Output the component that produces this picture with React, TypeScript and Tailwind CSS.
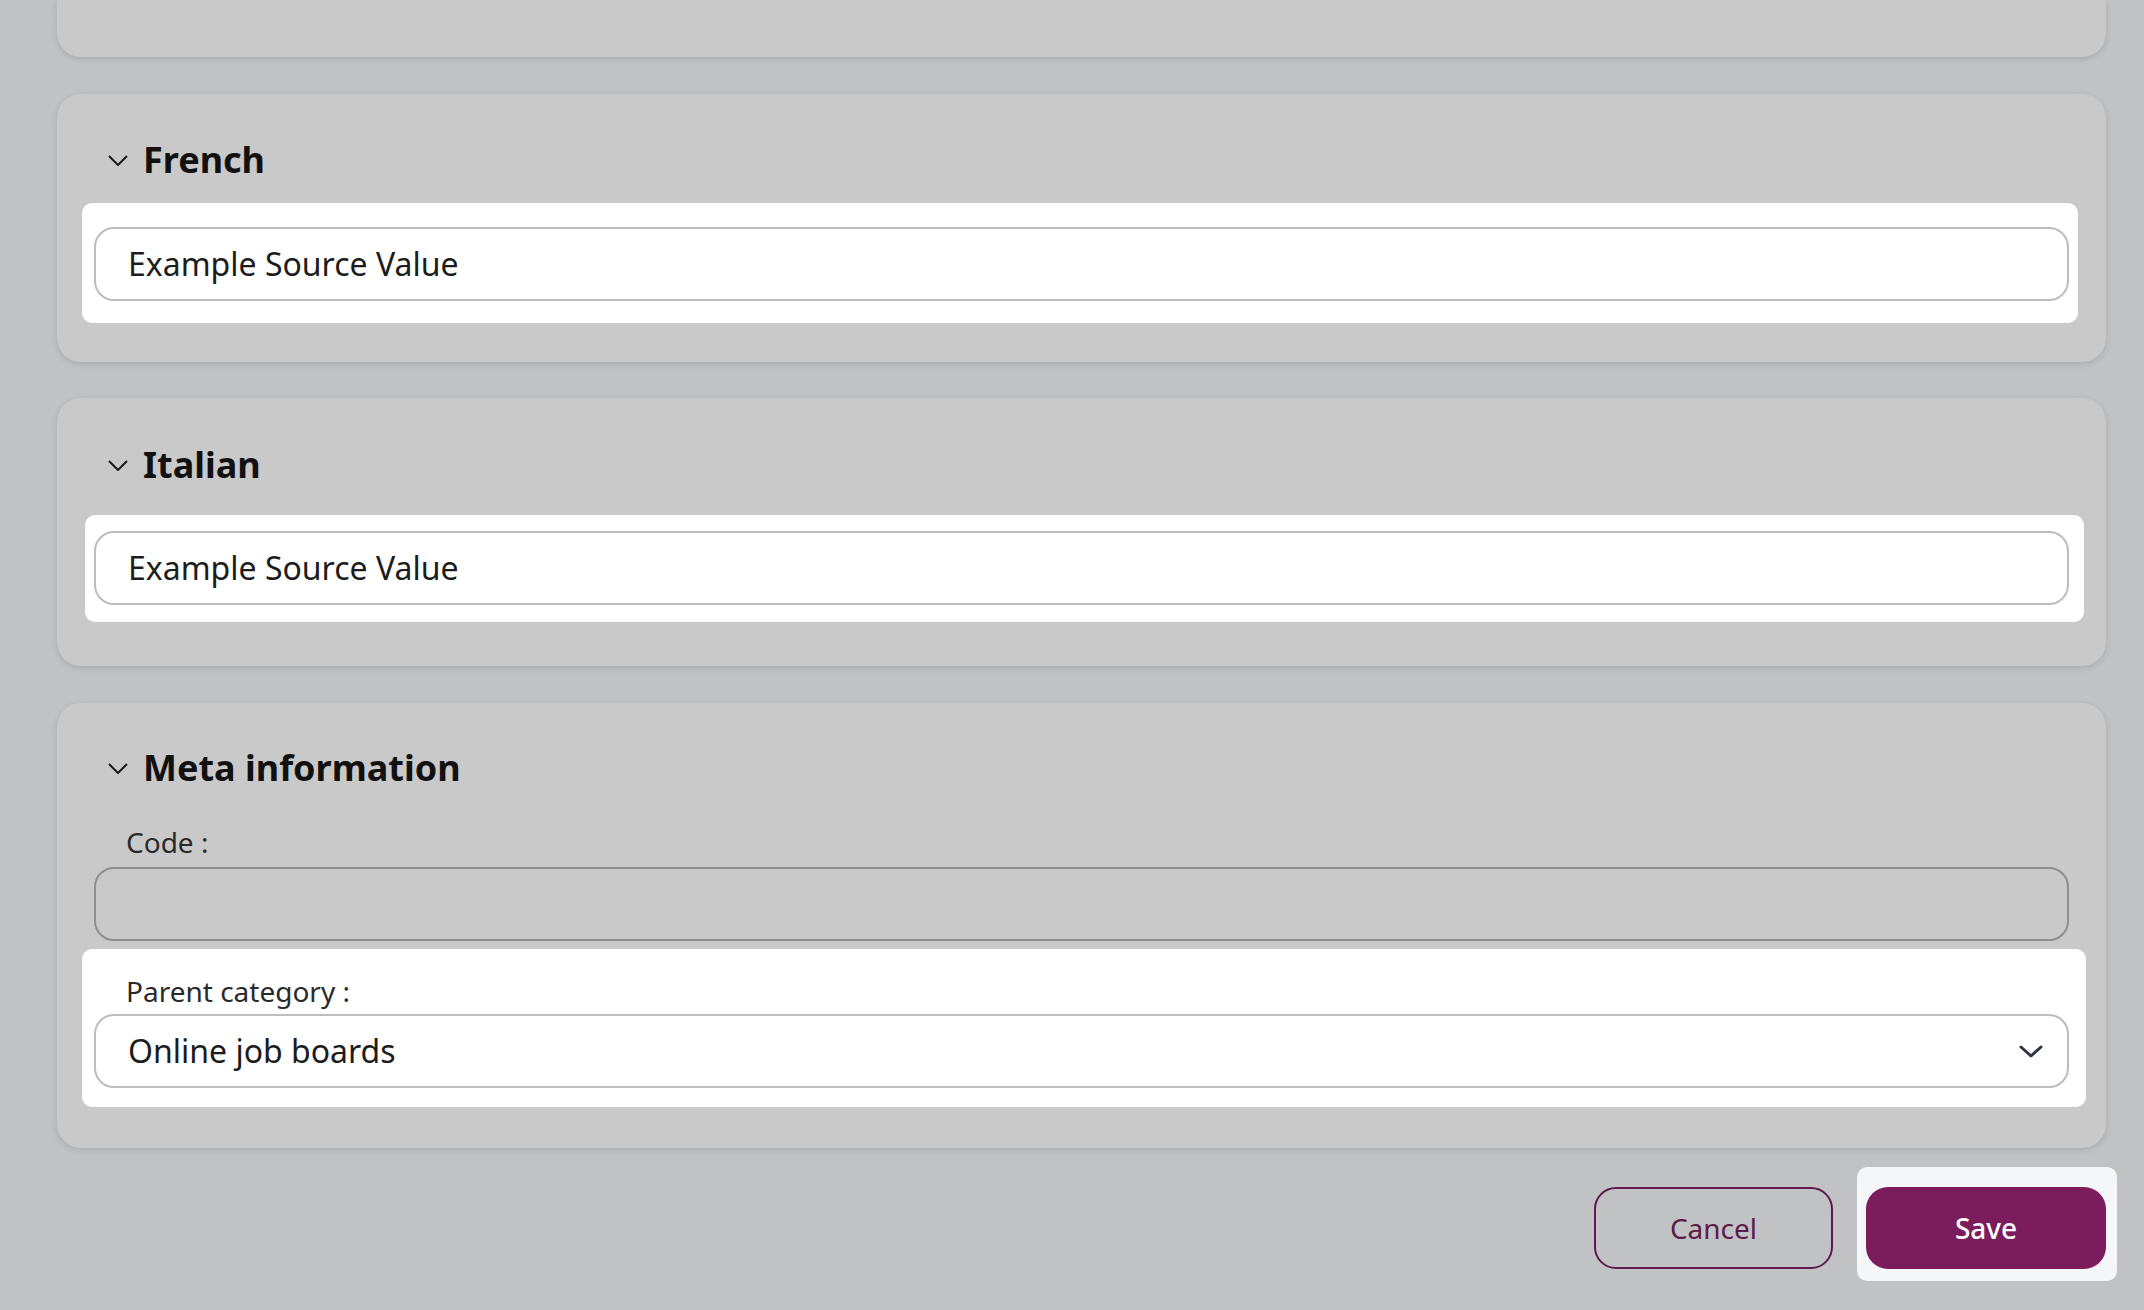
import React from "react";

const card = "rounded-[24px] bg-[#c9c9c9] shadow-[0_2px_6px_rgba(0,0,0,0.12)] px-[37px]";
const field = "flex h-[74px] items-center rounded-[20px] border-2 px-[32px] text-[32px] text-[#1c1c1c]";

function Chevron() {
  return (
    <svg width="20" height="11" viewBox="0 0 20 11" className="ml-[14px] mr-[15px] shrink-0">
      <polyline points="1,1 10,10 19,1" fill="none" stroke="#1a1a1a" strokeWidth="2" />
    </svg>
  );
}

function Heading({ title }: { title: string }) {
  return (
    <div className="flex h-[48px] items-center">
      <Chevron />
      <h2 className="text-[36px] font-bold leading-none text-[#111]">{title}</h2>
    </div>
  );
}

export default function App() {
  return (
    <main className="min-h-screen bg-[#c1c2c4] pl-[57px] pr-[38px] font-['Noto_Sans',sans-serif]">
      {/* previous section, cut off at the top */}
      <div className="h-[57px] rounded-b-[24px] bg-[#c9c9c9] shadow-[0_2px_6px_rgba(0,0,0,0.12)]" />

      <section className={`${card} mt-[37px] pt-[42px] pb-[39px]`}>
        <Heading title="French" />
        <div className="mt-[19px] -ml-[12px] -mr-[9px] rounded-[10px] bg-white pt-[24px] pb-[22px] pl-[12px] pr-[9px]">
          <div className={`${field} border-[#bdbdbd] bg-white`}>Example Source Value</div>
        </div>
      </section>

      <section className={`${card} mt-[36px] pt-[43px] pb-[44px]`}>
        <Heading title="Italian" />
        <div className="mt-[26px] -ml-[9px] -mr-[15px] rounded-[10px] bg-white pt-[16px] pb-[17px] pl-[9px] pr-[15px]">
          <div className={`${field} border-[#bdbdbd] bg-white`}>Example Source Value</div>
        </div>
      </section>

      <section className={`${card} mt-[37px] pt-[41px] pb-[41px]`}>
        <Heading title="Meta information" />
        <label className="mt-[31px] block pl-[32px] text-[28px] leading-[38px] text-[#2a2a2a]">Code :</label>
        <div className={`${field} mt-[6px] border-[#8e8e8e] bg-transparent`} />
        <div className="mt-[8px] -ml-[12px] -mr-[17px] rounded-[10px] bg-white pt-[23px] pb-[19px] pl-[12px] pr-[17px]">
          <label className="block pl-[32px] text-[28px] leading-[38px] text-[#2a2a2a]">Parent category :</label>
          <div className={`${field} mt-[4px] justify-between border-[#bdbdbd] bg-white pr-[24px]`}>
            <span>Online job boards</span>
            <svg width="24" height="13" viewBox="0 0 24 13">
              <polyline points="2,2 12,11 22,2" fill="none" stroke="#2d3440" strokeWidth="3" strokeLinecap="round" strokeLinejoin="round" />
            </svg>
          </div>
        </div>
      </section>

      <div className="mt-[19px] flex items-start justify-end">
        <button className="mt-[20px] h-[82px] w-[239px] rounded-[22px] border-2 border-[#5e1a4a] text-[28px] text-[#5e1a4a]">
          Cancel
        </button>
        <div className="ml-[24px] -mr-[11px] rounded-[10px] bg-[#f5f6fa] pt-[20px] pb-[12px] pl-[9px] pr-[11px]">
          <button className="h-[82px] w-[240px] rounded-[22px] bg-[#7b1c5c] text-[28px] font-medium text-white">
            Save
          </button>
        </div>
      </div>
    </main>
  );
}
